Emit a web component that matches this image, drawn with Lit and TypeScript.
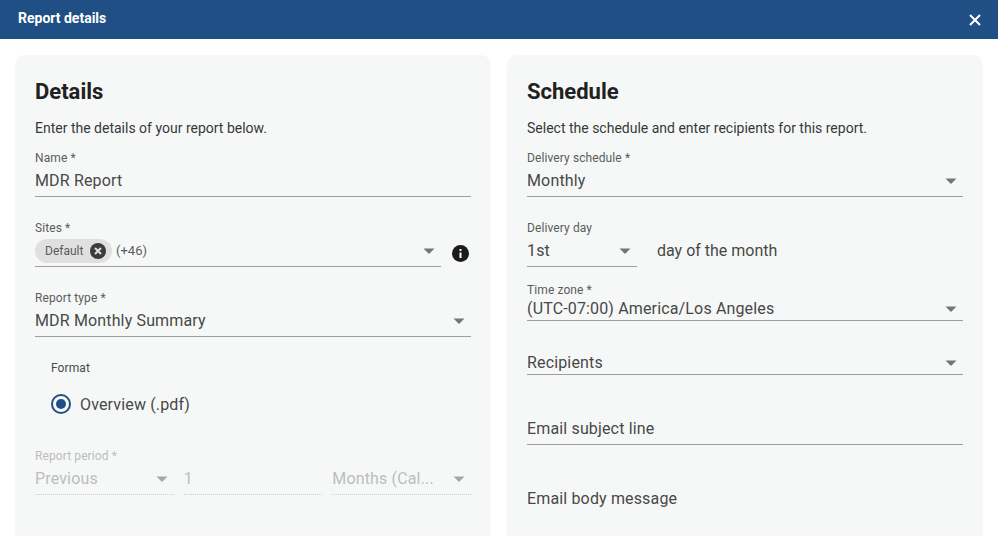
import { LitElement, html, css } from "lit";
import { customElement } from "lit/decorators.js";

const arrow = html`<svg class="arrow" width="12" height="6" viewBox="0 0 12 6"><path d="M0.5 0.5h11L6 6z"></path></svg>`;

@customElement("app-root")
export class AppRoot extends LitElement {
  static styles = css`
    :host {
      display: block;
      width: 998px;
      height: 536px;
      overflow: hidden;
      background: #fff;
      font-family: Roboto, "Liberation Sans", sans-serif;
      color: #484848;
    }
    * { box-sizing: border-box; }
    .bar {
      height: 39px;
      background: #204f85;
      color: #fff;
      display: flex;
      align-items: center;
      justify-content: space-between;
      padding: 0 16px 3px 18px;
      font-size: 14px;
      font-weight: 700;
    }
    .close { display: block; margin-top: 3px; }
    .cols {
      display: grid;
      grid-template-columns: 476px 476px;
      gap: 16px;
      padding: 16px 15px 0;
    }
    .card {
      background: #f6f8f7;
      border-radius: 10px;
      height: 520px;
      padding: 21px 20px 20px;
    }
    h2 {
      margin: 0;
      height: 32px;
      line-height: 32px;
      font-size: 22px;
      font-weight: 700;
      color: #212121;
    }
    .desc {
      margin: 11px 0 0;
      height: 18px;
      line-height: 18px;
      font-size: 14px;
      color: #383838;
    }
    .field { display: block; }
    .label {
      display: block;
      height: 14px;
      line-height: 16px;
      font-size: 12px;
      letter-spacing: 0.1px;
      color: #5c5c5c;
    }
    .control {
      display: flex;
      align-items: center;
      height: 29px;
      margin-top: 4px;
      padding-bottom: 4px;
      border-bottom: 1px solid #9e9e9e;
      font-size: 16px;
      letter-spacing: 0.15px;
      line-height: 24px;
    }
    .value { flex: 1; min-width: 0; white-space: nowrap; padding-top: 2px; }
    .arrow { flex: none; margin-right: 6px; margin-top: 2px; fill: #757575; }
    .first { margin-top: 13px; }
    .gap { margin-top: 23px; }
    .sites-row { display: flex; align-items: flex-start; }
    .sites-row .field { flex: 1; }
    .info { flex: none; margin: 25px 2px 0 11px; display: block; }
    .chip {
      display: flex;
      align-items: center;
      height: 24px;
      width: 77px;
      margin-top: 1px;
      padding-left: 10px;
      border-radius: 12px;
      background: #e0e0e0;
      font-size: 12px;
      letter-spacing: 0;
      color: #5c5c5c;
      flex: none;
    }
    .chip svg { display: block; margin-left: 7px; }
    .more { margin-left: 4px; font-size: 13px; letter-spacing: 0; color: #5c5c5c; }
    .group { margin-top: 23px; padding-left: 16px; }
    .group .label { color: #4a4a4a; }
    .radio {
      display: flex;
      align-items: center;
      gap: 9px;
      margin-top: 18px;
      height: 24px;
      font-size: 16px;
      letter-spacing: 0.15px;
    }
    .radio svg { display: block; flex: none; }
    .period { margin-top: 32px; }
    .period .label { color: #bdbdbd; }
    .period-row {
      display: grid;
      grid-template-columns: repeat(3, 1fr);
      column-gap: 10px;
    }
    .period-row .control {
      color: #bdbdbd;
      border-bottom: 1px dotted #cfcfcf;
    }
    .period-row .arrow { fill: #a6a6a6; }
    .day-row { display: flex; align-items: flex-start; }
    .day { width: 110px; flex: none; }
    .day-text {
      margin: 19px 0 0 20px;
      line-height: 24px;
      font-size: 16px;
      letter-spacing: 0;
    }
    .tz { margin-top: 15px; }
    .tz .control { height: 25px; margin-top: 0; padding-bottom: 0; }
    .recipients { margin-top: 29px; }
    .recipients .control { height: 25px; margin-top: 0; padding-bottom: 0; }
    .subject { margin-top: 41px; }
    .subject .control { margin-top: 0; }
    .body { margin-top: 40px; }
    .body .control { margin-top: 0; border-bottom: 0; }
  `;

  private select(value: string) {
    return html`<div class="control"><span class="value">${value}</span>${arrow}</div>`;
  }

  private details() {
    return html`
      <section class="card">
        <h2>Details</h2>
        <p class="desc">Enter the details of your report below.</p>
        <div class="field first">
          <span class="label">Name *</span>
          <div class="control"><span class="value">MDR Report</span></div>
        </div>
        <div class="sites-row gap">
          <div class="field">
            <span class="label">Sites *</span>
            <div class="control">
              <span class="chip">Default
                <svg width="16" height="16" viewBox="0 0 16 16">
                  <circle cx="8" cy="8" r="8" fill="#3c3c3c"></circle>
                  <path d="M5 5l6 6M11 5l-6 6" stroke="#e0e0e0" stroke-width="2"></path>
                </svg>
              </span>
              <span class="value more">(+46)</span>${arrow}
            </div>
          </div>
          <svg class="info" width="17" height="17" viewBox="0 0 17 17">
            <circle cx="8.5" cy="8.5" r="8.5" fill="#1c1c1c"></circle>
            <rect x="7.5" y="7.5" width="2" height="5.5" fill="#fff"></rect>
            <rect x="7.5" y="4" width="2" height="2" fill="#fff"></rect>
          </svg>
        </div>
        <div class="field gap">
          <span class="label">Report type *</span>
          ${this.select("MDR Monthly Summary")}
        </div>
        <div class="group">
          <span class="label">Format</span>
          <div class="radio">
            <svg width="20" height="20" viewBox="0 0 20 20">
              <circle cx="10" cy="10" r="9" fill="none" stroke="#204f85" stroke-width="2"></circle>
              <circle cx="10" cy="10" r="5" fill="#204f85"></circle>
            </svg>
            <span>Overview (.pdf)</span>
          </div>
        </div>
        <div class="field period">
          <span class="label">Report period *</span>
          <div class="period-row">
            ${this.select("Previous")}
            <div class="control"><span class="value">1</span></div>
            ${this.select("Months (Cal...")}
          </div>
        </div>
      </section>
    `;
  }

  private schedule() {
    return html`
      <section class="card">
        <h2>Schedule</h2>
        <p class="desc">Select the schedule and enter recipients for this report.</p>
        <div class="field first">
          <span class="label">Delivery schedule *</span>
          ${this.select("Monthly")}
        </div>
        <div class="day-row gap">
          <div class="field day">
            <span class="label">Delivery day</span>
            ${this.select("1st")}
          </div>
          <span class="day-text">day of the month</span>
        </div>
        <div class="field tz">
          <span class="label">Time zone *</span>
          ${this.select("(UTC-07:00) America/Los Angeles")}
        </div>
        <div class="field recipients">${this.select("Recipients")}</div>
        <div class="field subject">
          <div class="control"><span class="value">Email subject line</span></div>
        </div>
        <div class="field body">
          <div class="control"><span class="value">Email body message</span></div>
        </div>
      </section>
    `;
  }

  render() {
    return html`
      <header class="bar">
        <span>Report details</span>
        <svg class="close" width="14" height="14" viewBox="0 0 14 14">
          <path d="M2 2l10 10M12 2L2 12" stroke="#fff" stroke-width="2"></path>
        </svg>
      </header>
      <div class="cols">${this.details()}${this.schedule()}</div>
    `;
  }
}
